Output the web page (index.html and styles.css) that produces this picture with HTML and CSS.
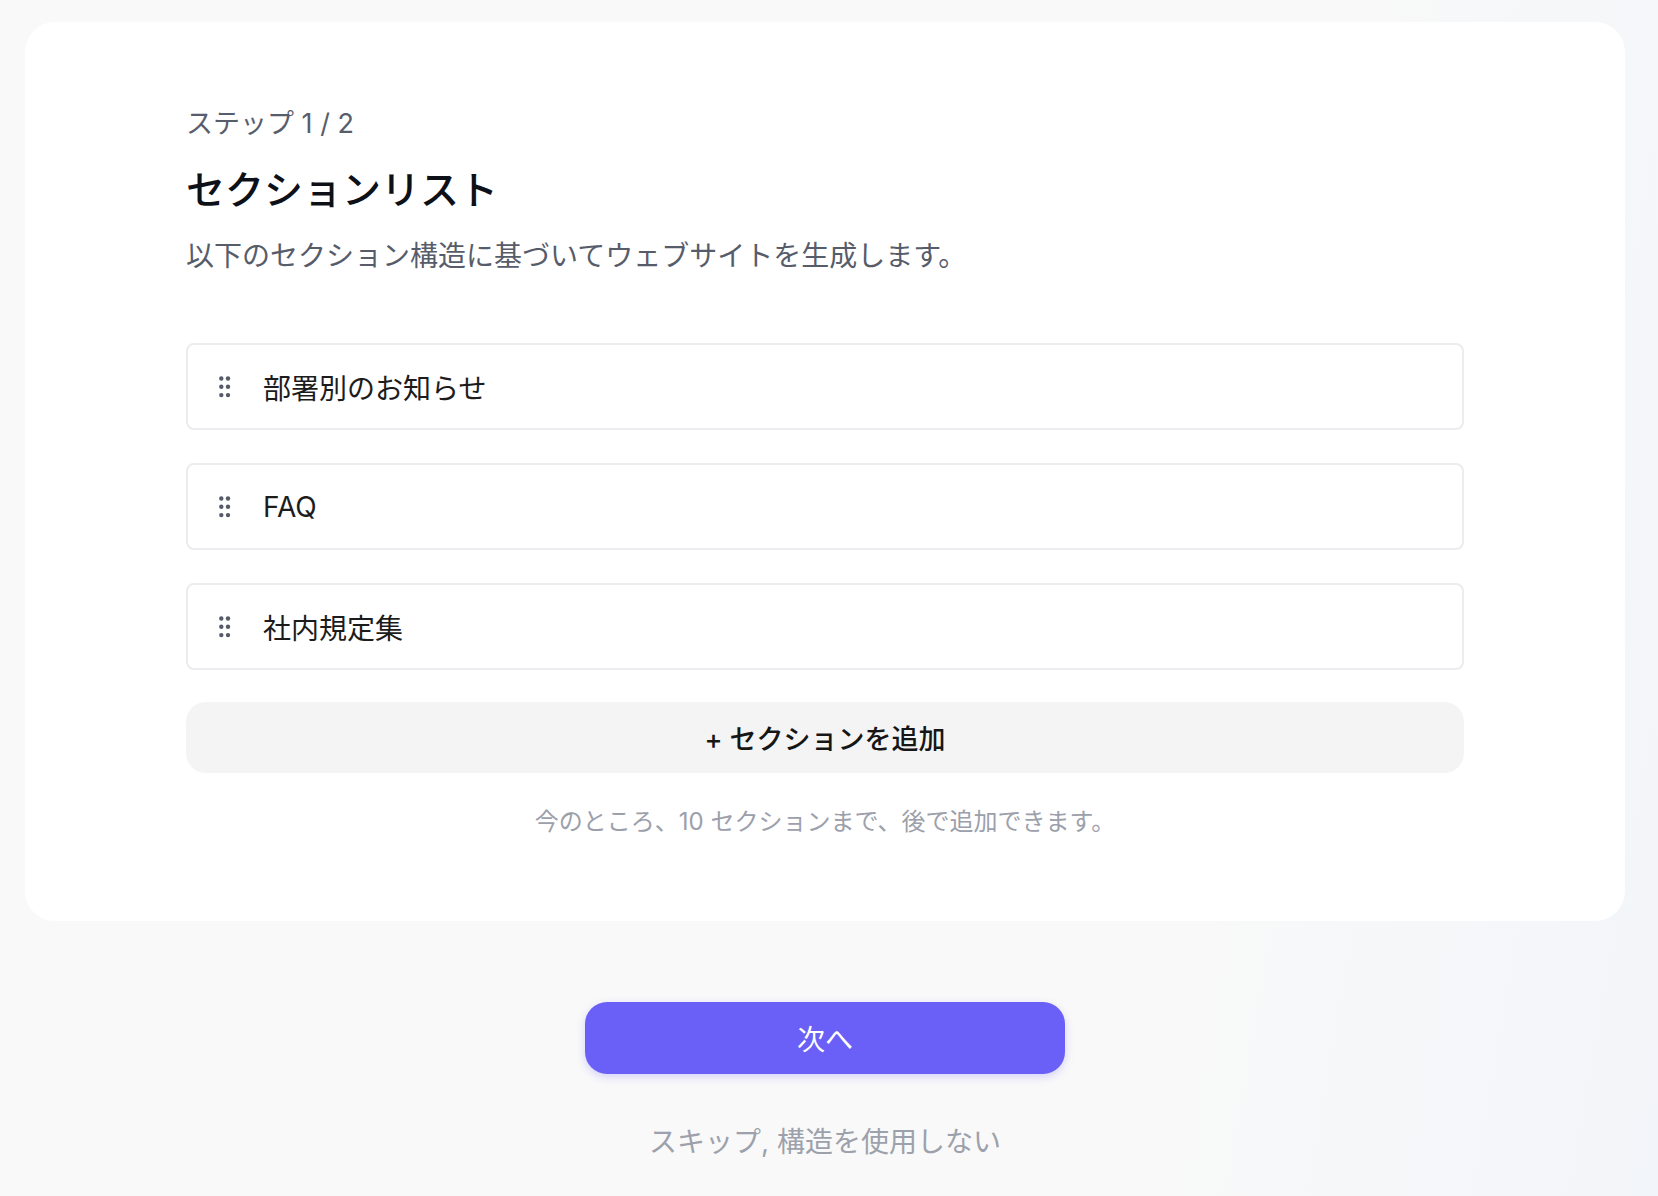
FILE: index.html
```html
<!DOCTYPE html>
<html lang="ja">

<head>
  <meta charset="UTF-8">
  <meta name="viewport" content="width=device-width, initial-scale=1.0">
  <title>セクションリスト</title>
  <link rel="stylesheet" href="styles.css">
</head>

<body>
  <div class="page">
    <div class="card">
      <p class="step">ステップ 1 / 2</p>
      <h1 class="title">セクションリスト</h1>
      <p class="desc">以下のセクション構造に基づいてウェブサイトを生成します。</p>

      <ul class="sections">
        <li class="section">
          <svg class="handle" width="12" height="22" viewBox="0 0 12 22">
            <circle cx="2.3" cy="2.5" r="2.2" />
            <circle cx="9" cy="2.5" r="2.2" />
            <circle cx="2.3" cy="10.8" r="2.2" />
            <circle cx="9" cy="10.8" r="2.2" />
            <circle cx="2.3" cy="19.1" r="2.2" />
            <circle cx="9" cy="19.1" r="2.2" />
          </svg>
          <span class="section-name">部署別のお知らせ</span>
        </li>
        <li class="section">
          <svg class="handle" width="12" height="22" viewBox="0 0 12 22">
            <circle cx="2.3" cy="2.5" r="2.2" />
            <circle cx="9" cy="2.5" r="2.2" />
            <circle cx="2.3" cy="10.8" r="2.2" />
            <circle cx="9" cy="10.8" r="2.2" />
            <circle cx="2.3" cy="19.1" r="2.2" />
            <circle cx="9" cy="19.1" r="2.2" />
          </svg>
          <span class="section-name">FAQ</span>
        </li>
        <li class="section">
          <svg class="handle" width="12" height="22" viewBox="0 0 12 22">
            <circle cx="2.3" cy="2.5" r="2.2" />
            <circle cx="9" cy="2.5" r="2.2" />
            <circle cx="2.3" cy="10.8" r="2.2" />
            <circle cx="9" cy="10.8" r="2.2" />
            <circle cx="2.3" cy="19.1" r="2.2" />
            <circle cx="9" cy="19.1" r="2.2" />
          </svg>
          <span class="section-name">社内規定集</span>
        </li>
      </ul>

      <button class="add">+ セクションを追加</button>
      <p class="note">今のところ、10 セクションまで、後で追加できます。</p>
    </div>

    <div class="actions">
      <button class="next">次へ</button>
      <a class="skip" href="#">スキップ, 構造を使用しない</a>
    </div>
  </div>
</body>

</html>
```

FILE: styles.css
```css
* {
  margin: 0;
  padding: 0;
  box-sizing: border-box;
}

html,
body {
  font-family: Inter, "Noto Sans CJK JP", sans-serif;
}

body {
  min-height: 1196px;
  background: linear-gradient(100deg, #f9f9f9 72%, #f2f5f9 100%);
}

.page {
  padding: 22px 33px 0 25px;
}

.card {
  background-color: #fff;
  border-radius: 30px;
  padding: 84px 161px 82px;
}

.step {
  font-size: 27px;
  line-height: 36px;
  color: #585d6b;
}

.title {
  margin-top: 22px;
  font-size: 39px;
  line-height: 52px;
  font-weight: 500;
  color: #0e1018;
}

.desc {
  margin-top: 20px;
  font-size: 28px;
  line-height: 40px;
  color: #575c6a;
}

.sections {
  list-style: none;
  margin-top: 67px;
  display: flex;
  flex-direction: column;
  gap: 33px;
}

.section {
  height: 87px;
  display: flex;
  align-items: center;
  padding-left: 31px;
  border: 2px solid #eaecef;
  border-radius: 8px;
}

.handle {
  fill: #565b69;
  flex-shrink: 0;
}

.section-name {
  margin-left: 32px;
  font-size: 28px;
  font-weight: 400;
  color: #1c1c1c;
}

.add {
  display: block;
  width: 100%;
  height: 71px;
  margin-top: 32px;
  border: none;
  outline: none;
  border-radius: 20px;
  background-color: #f4f4f4;
  font-family: inherit;
  font-size: 27px;
  font-weight: 500;
  color: #161616;
  cursor: pointer;
}

.note {
  margin-top: 32px;
  text-align: center;
  font-size: 24px;
  line-height: 34px;
  color: #9ca0ab;
}

.actions {
  display: flex;
  flex-direction: column;
  align-items: center;
  padding-top: 81px;
}

.next {
  width: 480px;
  height: 72px;
  border: none;
  outline: none;
  border-radius: 22px;
  background-color: #6a5ff6;
  box-shadow: 0 3px 8px rgba(106, 95, 246, .25);
  font-family: inherit;
  font-size: 28px;
  font-weight: 400;
  color: #fff;
  cursor: pointer;
}

.skip {
  margin-top: 48px;
  font-size: 28px;
  line-height: 40px;
  color: #9ca1ab;
  text-decoration: none;
}
```
